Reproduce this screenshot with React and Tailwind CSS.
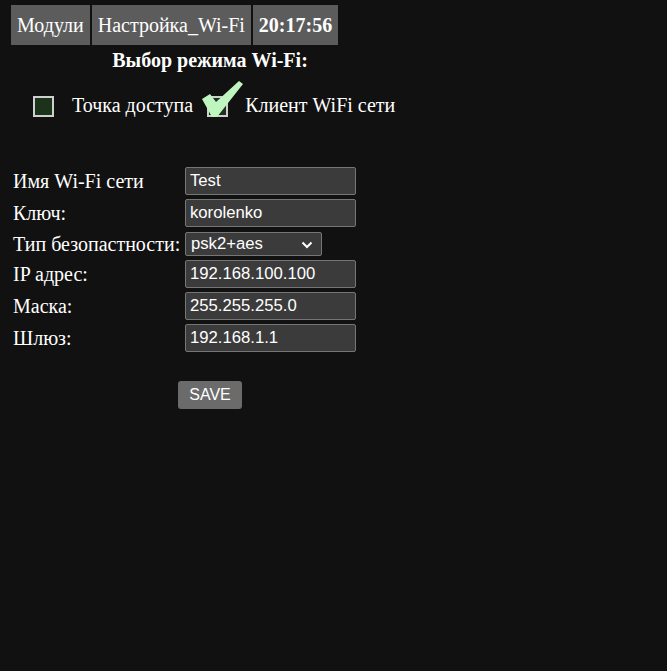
import { useState } from "react";

const serif = { fontFamily: '"Liberation Serif", "Times New Roman", serif' };
const sans = { fontFamily: '"Liberation Sans", Arial, sans-serif' };

const Tab = ({ children, bold }) => (
  <div className={`h-10 px-[6px] flex items-center bg-[#5c5c5c] text-white text-[20px] ${bold ? "font-bold" : ""}`}>
    {children}
  </div>
);

// big green tick drawn over the checkbox
const Check = () => (
  <svg width="44" height="40" viewBox="0 0 44 40" className="absolute left-[-9px] top-[-19px]">
    <polygon points="2,20 10,15 16,23 39,2 43,5 17,38 12,38" fill="#bff5bf" />
  </svg>
);

const Row = ({ label, children, h = "h-[28px]" }) => (
  <div className={`flex items-center ${h}`}>
    <div className="w-[172px] text-[20px] leading-none text-white whitespace-nowrap">{label}</div>
    {children}
  </div>
);

const Field = ({ value }) => (
  <input
    defaultValue={value}
    className="w-[171px] h-[28px] px-[4px] bg-[#3b3b3b] border border-[#767676] rounded-[2px] text-white text-[16.7px] outline-none"
    style={sans}
  />
);

export default function App() {
  const [mode, setMode] = useState("client");

  return (
    <div className="min-h-[671px] bg-[#111111] text-white" style={serif}>
      <div className="pt-[5px] pl-[11px] flex gap-[2px]">
        <Tab>Модули</Tab>
        <Tab>Настройка_Wi-Fi</Tab>
        <Tab bold>20:17:56</Tab>
      </div>

      <div className="w-[420px] text-center font-bold text-[20px] leading-[23px] mt-[4px]">Выбор режима Wi-Fi:</div>

      <div className="flex items-center h-[23px] mt-[23px] pl-[33px] text-[20px]">
        <button
          onClick={() => setMode("ap")}
          className="relative w-[21px] h-[21px] border-2 border-[#cfcfcf] bg-[#1b3319]"
        >
          {mode === "ap" && <Check />}
        </button>
        <span className="ml-[18px] mb-[4px]">Точка доступа</span>
        <button
          onClick={() => setMode("client")}
          className="relative ml-[14px] w-[21px] h-[21px] border-2 border-[#cfcfcf] bg-[#1b3319]"
        >
          {mode === "client" && <Check />}
        </button>
        <span className="ml-[17px] mb-[4px]">Клиент WiFi сети</span>
      </div>

      <div className="mt-[49px] pl-[13px] flex flex-col gap-[4px]">
        <Row label="Имя Wi-Fi сети"><Field value="Test" /></Row>
        <Row label="Ключ:"><Field value="korolenko" /></Row>
        <Row label="Тип безопастности:" h="h-[25px]">
          <div
            className="relative w-[137px] h-[24px] bg-[#3b3b3b] border border-[#767676] rounded-[2px] flex items-center pl-[5px] text-[16.7px]"
            style={sans}
          >
            psk2+aes
            <svg width="12" height="8" viewBox="0 0 12 8" className="absolute right-[8px] top-[8px]">
              <path d="M1.5 1.5 L6 6 L10.5 1.5" stroke="white" strokeWidth="2" fill="none" />
            </svg>
          </div>
        </Row>
        <Row label="IP адрес:"><Field value="192.168.100.100" /></Row>
        <Row label="Маска:"><Field value="255.255.255.0" /></Row>
        <Row label="Шлюз:"><Field value="192.168.1.1" /></Row>
      </div>

      <div className="pl-[178px] mt-[29px]">
        <button className="w-[64px] h-[28px] bg-[#6b6b6b] rounded-[3px] text-white text-[16px]" style={sans}>
          SAVE
        </button>
      </div>
    </div>
  );
}
